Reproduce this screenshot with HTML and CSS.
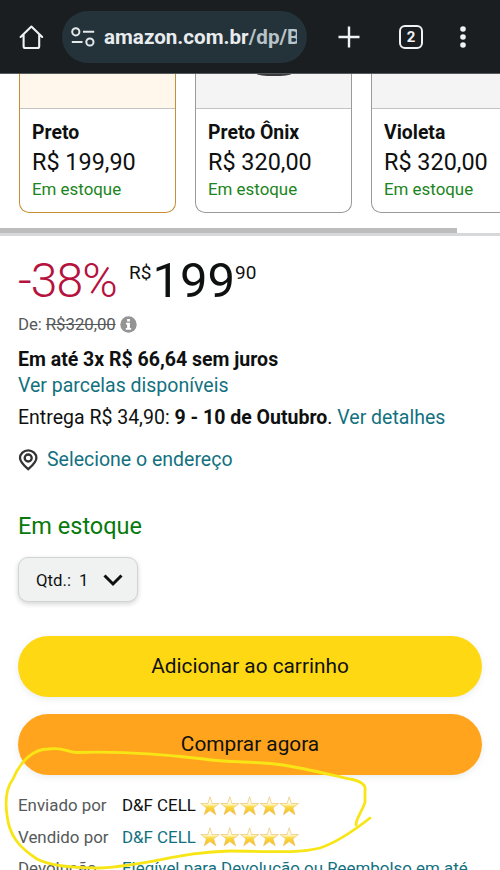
FILE: index.html
```html
<!DOCTYPE html>
<html lang="pt-BR">
<head>
<meta charset="utf-8">
<meta name="viewport" content="width=device-width, initial-scale=1">
<title>Amazon.com.br</title>
<link rel="stylesheet" href="styles.css">
</head>
<body>
<svg class="defs" width="0" height="0" aria-hidden="true">
  <defs>
    <linearGradient id="gold" x1="0" y1="0" x2="0" y2="1">
      <stop offset="0.3" stop-color="#fffdf2"/>
      <stop offset="0.46" stop-color="#fff0a8"/>
      <stop offset="0.56" stop-color="#fbd83c"/>
      <stop offset="1" stop-color="#f5b921"/>
    </linearGradient>
    <symbol id="star" viewBox="0 0 20 20">
      <path d="M10 .8 12.1 7.5H19.2L13.6 11.8 15.8 18.8 10 14.6 4.2 18.800 6.4 11.8.8 7.500H7.900Z" fill="url(#gold)" stroke="#ecc46a" stroke-width="0.7" stroke-linejoin="round"/>
    </symbol>
    <symbol id="stars" viewBox="0 0 100 20">
      <use href="#star" x="0" width="20" height="20"/>
      <use href="#star" x="19.8" width="20" height="20"/>
      <use href="#star" x="39.6" width="20" height="20"/>
      <use href="#star" x="59.4" width="20" height="20"/>
      <use href="#star" x="79.2" width="20" height="20"/>
    </symbol>
  </defs>
</svg>
<div class="screen">
  <header class="toolbar">
    <svg class="home" width="26" height="26" viewBox="0 0 26 26" fill="none" stroke="#f0f2f3" stroke-width="2.1" stroke-linejoin="round" stroke-linecap="round"><path d="M2.6 13 13.400 2.6 24.200 13M5.6 11V22.2Q5.6 24 7.4 24H19.4Q21.2 24 21.2 22.2V11"/></svg>
    <div class="address">
      <svg width="24" height="20" viewBox="0 0 24 20" fill="none" stroke="#e3e8ea" stroke-width="2"><circle cx="4.8" cy="4.8" r="3.6"/><path d="M12 4.8H23.2M.8 15H11.5"/><circle cx="18.9" cy="15" r="3.6"/></svg>
      <div class="url">amazon.com.br<span class="path">/dp/B</span></div>
    </div>
    <svg class="plus" width="22" height="22" viewBox="0 0 22 22" stroke="#f0f2f3" stroke-width="2.4"><path d="M11 .5V21.5M.5 11H21.5"/></svg>
    <div class="tabs">2</div>
    <svg class="more" width="6" height="22" viewBox="0 0 6 22" fill="#f0f2f3"><circle cx="3" cy="3" r="2.8"/><circle cx="3" cy="11" r="2.8"/><circle cx="3" cy="19" r="2.8"/></svg>
  </header>

  <section class="variants">
    <div class="card selected"><div class="thumb"></div><div class="name">Preto</div><div class="cost">R$ 199,90</div><div class="stock">Em estoque</div></div>
    <div class="card"><div class="thumb"><i class="product"></i></div><div class="name">Preto Ônix</div><div class="cost">R$ 320,00</div><div class="stock">Em estoque</div></div>
    <div class="card"><div class="thumb"></div><div class="name">Violeta</div><div class="cost">R$ 320,00</div><div class="stock">Em estoque</div></div>
  </section>
  <div class="scroll"><div class="thumb-bar"></div></div>

  <main>
    <div class="price"><span class="off">-38%</span><span class="sup cur">R$</span><span class="whole">199</span><span class="sup cents">90</span></div>
    <div class="list"><span class="de">De:</span><s>R$320,00</s><svg width="17" height="17" viewBox="0 0 17 17"><circle cx="8.5" cy="8.5" r="8.2" fill="#949494"/><path d="M7.1 3h2.8v2.4H7.1zM5.9 6.8h4v5.3h1.3v1.7H5.8v-1.7h1.3V8.5H5.9z" fill="#fff"/></svg></div>
    <div class="row install"><b>Em até 3x R$ 66,64 sem juros</b></div>
    <div class="row"><a>Ver parcelas disponíveis</a></div>
    <div class="row delivery">Entrega R$ 34,90: <b>9 - 10 de Outubro</b>. <a>Ver detalhes</a></div>
    <div class="row location"><svg width="20" height="22" viewBox="0 0 20 22" fill="none" stroke="#333" stroke-width="2.3"><path d="M10.2 20.2C6 16.5 2 13.2 2 9a8.2 7.7 0 0 1 16.4 0C18.4 13.2 14.4 16.5 10.2 20.2Z"/><circle cx="10.2" cy="9" r="3.5"/></svg><a>Selecione o endereço</a></div>
    <div class="available">Em estoque</div>
    <div class="qty"><span>Qtd.:</span><span class="num">1</span><svg width="20" height="13" viewBox="0 0 20 13" fill="none" stroke="#0f1111" stroke-width="3"><path d="M1.5 1.5 10 10 18.5 1.5"/></svg></div>
    <div class="btn add">Adicionar ao carrinho</div>
    <div class="btn buy">Comprar agora</div>
    <div class="seller"><span class="label">Enviado por</span><span class="who">D&amp;F CELL</span><svg width="100" height="20"><use href="#stars"/></svg></div>
    <div class="seller"><span class="label">Vendido por</span><a class="who">D&amp;F CELL</a><svg width="100" height="20"><use href="#stars"/></svg></div>
    <div class="seller"><span class="label">Devolução</span><a class="policy">Elegível para Devolução ou Reembolso em até</a></div>
  </main>
  <svg class="ink" width="500" height="870" viewBox="0 0 500 870" fill="none" stroke="#f8e516" stroke-width="2.8" stroke-linecap="round" stroke-linejoin="round"><path d="M370 818C356 829 338 842 320 848C298 854 262 851 230 851C180 852 150 865 100 868C67 868 48 865 37 859C20 848 9 836 7 815C5 801 6 788 13 779C21 760 34 749 48 749C65 747 66 752 76 752.500C116 751 162 754 204 759C230 763 254 761 283 765C308 769 331 775 350 779C361 781 366 785 365 790V802C363 810 356 818 356 825"/></svg>
</div>
</body>
</html>
```

FILE: styles.css
```css
* { box-sizing: border-box; }
body { margin: 0; background: #fff; }
.defs { position: absolute; }
.screen {
  position: relative;
  width: 500px;
  height: 870px;
  overflow: hidden;
  background: #fff;
  color: #0f1111;
  font-family: Roboto, "Liberation Sans", sans-serif;
  white-space: nowrap;
}
svg { display: block; flex: none; }
a { color: #13717f; }
b { font-weight: 700; }

.toolbar {
  display: flex;
  align-items: center;
  height: 74px;
  padding: 0 0 0 18px;
  background: #1a1e20;
  border-bottom: 1px solid #55595b;
}
.address {
  display: flex;
  align-items: center;
  gap: 9px;
  width: 245px;
  height: 52px;
  margin-left: 18px;
  padding-left: 9px;
  border-radius: 26px;
  background: #243239;
}
.url {
  width: 193px;
  padding-top: 1px;
  overflow: hidden;
  color: #e8ecee;
  font-size: 20.6px;
  font-weight: 700;
  line-height: 28px;
}
.path { color: #b9c3c8; }
.plus { margin-left: 31px; }
.tabs {
  width: 24px;
  height: 24px;
  margin-left: 39px;
  border: 2.5px solid #f0f2f3;
  border-radius: 6px;
  color: #f0f2f3;
  font-size: 15px;
  font-weight: 700;
  line-height: 20px;
  text-align: center;
}
.more { margin-left: 37px; }

.variants {
  display: flex;
  gap: 19px;
  height: 154px;
  padding: 0 0 15px 19px;
}
.card {
  flex: none;
  width: 157px;
  border: 1px solid #989b9b;
  border-top: 0;
  border-radius: 0 0 10px 10px;
  overflow: hidden;
}
.card.selected { border: 1px solid #c78f35; border-top: 0; }
.thumb {
  height: 35px;
  background: #f4f4f4;
  border-bottom: 1px solid #c3c3c3;
}
.selected .thumb { background: #fff7ec; }
.product {
  display: block;
  width: 34px;
  height: 2px;
  margin: 0 auto;
  border-radius: 0 0 50% 50% / 0 0 100% 100%;
  background: #3a3a3f;
}
.name, .cost, .stock { padding-left: 12px; }
.name { margin-top: 11px; font-size: 19.4px; font-weight: 700; line-height: 26px; }
.cost { padding-top: 1px; font-size: 23.4px; line-height: 30px; }
.stock { color: #1b8521; font-size: 16.9px; line-height: 24px; }
.scroll { height: 8px; border-bottom: 3px solid #d5d9d9; }
.thumb-bar { width: 457px; height: 5px; background: #bdbdbd; }

main { padding: 16px 18px 0; }
.price { display: flex; height: 58px; line-height: 58px; }
.off { width: 111px; color: #b5123e; font-size: 48px; font-weight: 300; letter-spacing: -.9px; }
.whole { margin-left: 1px; font-size: 49px; }
.sup { font-size: 19px; line-height: 41px; }
.list {
  display: flex;
  align-items: center;
  height: 28px;
  color: #565959;
  font-size: 16.8px;
  letter-spacing: -.05px;
  line-height: 28px;
}
.de { margin-right: 4px; }
.list svg { margin-left: 4px; }
.row { font-size: 19.5px; line-height: 26px; }
.install { margin-top: 9px; }
.delivery { margin-top: 6px; }
.location { display: flex; align-items: center; margin-top: 16px; }
.location a { margin-left: 9px; }
.available { margin-top: 38px; color: #08790b; font-size: 23.5px; line-height: 30px; }
.qty {
  display: flex;
  align-items: center;
  width: 120px;
  height: 45px;
  margin-top: 16px;
  padding-left: 17px;
  border: 1px solid #d0d4d4;
  border-radius: 10px;
  background: #f0f2f2;
  box-shadow: 0 2px 5px rgba(15, 17, 17, .18);
  font-size: 16.8px;
}
.qty svg { margin-top: 2px; }
.num { margin: 0 15px 0 8px; }
.btn {
  height: 61px;
  border-radius: 31px;
  box-shadow: 0 2px 6px rgba(213, 217, 217, .5);
  font-size: 20.8px;
  line-height: 61px;
  text-align: center;
}
.add { margin-top: 34px; background: #ffd814; }
.buy { margin: 17px 0 14px; background: #ffa41c; }
.seller { display: flex; height: 32px; font-size: 16.9px; line-height: 32px; }
.seller + .seller { height: 31px; }
.label { width: 104px; color: #565959; }
.who { width: 78px; }
.seller svg { margin-top: 7px; }
.seller + .seller svg { margin-top: 6px; }
.ink { position: absolute; top: 0; left: 0; }
```
